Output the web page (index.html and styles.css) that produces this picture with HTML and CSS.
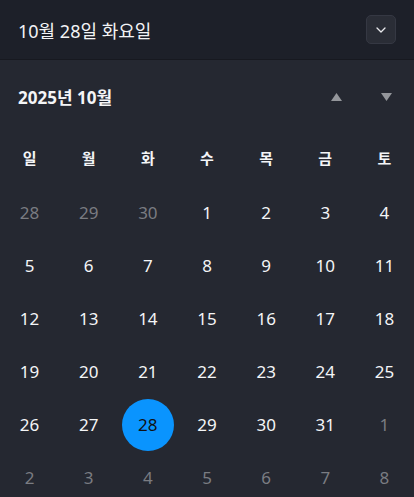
FILE: index.html
```html
<!DOCTYPE html>
<html lang="ko">
<head>
<meta charset="utf-8">
<link rel="stylesheet" href="styles.css">
</head>
<body>
<div class="picker">
  <header class="header">
    <span class="header-date">10월 28일 화요일</span>
    <button class="toggle" aria-label="접기">
      <svg width="10" height="6" viewBox="0 0 10 6"><path d="M1 1 L5 5 L9 1" fill="none" stroke="#e8e9ec" stroke-width="1.3" stroke-linecap="round" stroke-linejoin="round"/></svg>
    </button>
  </header>
  <section class="calendar">
    <div class="month-row">
      <span class="month-title">2025년 10월</span>
      <div class="nav">
        <button class="nav-btn" aria-label="이전 달"><svg width="11" height="8" viewBox="0 0 11 8"><path d="M5.5 0 L11 8 L0 8 Z" fill="#94969b"/></svg></button>
        <button class="nav-btn" aria-label="다음 달"><svg width="11" height="8" viewBox="0 0 11 8"><path d="M0 0 L11 0 L5.5 8 Z" fill="#94969b"/></svg></button>
      </div>
    </div>
    <div class="grid">
      <div class="wd">일</div><div class="wd">월</div><div class="wd">화</div><div class="wd">수</div><div class="wd">목</div><div class="wd">금</div><div class="wd">토</div>

      <div class="d other">28</div><div class="d other">29</div><div class="d other">30</div><div class="d">1</div><div class="d">2</div><div class="d">3</div><div class="d">4</div>
      <div class="d">5</div><div class="d">6</div><div class="d">7</div><div class="d">8</div><div class="d">9</div><div class="d">10</div><div class="d">11</div>
      <div class="d">12</div><div class="d">13</div><div class="d">14</div><div class="d">15</div><div class="d">16</div><div class="d">17</div><div class="d">18</div>
      <div class="d">19</div><div class="d">20</div><div class="d">21</div><div class="d">22</div><div class="d">23</div><div class="d">24</div><div class="d">25</div>
      <div class="d">26</div><div class="d">27</div><div class="d selected"><span class="dot">28</span></div><div class="d">29</div><div class="d">30</div><div class="d">31</div><div class="d other">1</div>
      <div class="d other">2</div><div class="d other">3</div><div class="d other">4</div><div class="d other">5</div><div class="d other">6</div><div class="d other">7</div><div class="d other">8</div>
    </div>
  </section>
</div>
</body>
</html>
```
FILE: styles.css
```css
html, body {
  margin: 0;
  padding: 0;
  background: #252831;
  font-family: "Noto Sans", "Noto Sans CJK KR", sans-serif;
  color: #ffffff;
}
.picker {
  width: 414px;
  height: 497px;
  overflow: hidden;
}
.header {
  height: 60px;
  box-sizing: border-box;
  background: #1d2029;
  border-bottom: 1px solid #171920;
  display: flex;
  align-items: center;
  justify-content: space-between;
  padding: 0 18px;
}
.header-date {
  font-size: 18px;
  color: #f2f3f5;
}
.toggle {
  width: 30px;
  height: 29px;
  box-sizing: border-box;
  border: 1px solid #353843;
  border-radius: 5px;
  background: #2a2d36;
  display: flex;
  align-items: center;
  justify-content: center;
  padding: 0;
}
.calendar {
  background: #252831;
}
.month-row {
  height: 73px;
  display: flex;
  align-items: center;
  justify-content: space-between;
  padding: 0 13px 0 18px;
}
.month-title {
  font-size: 17px;
  font-weight: 700;
  color: #f4f5f7;
}
.nav {
  display: flex;
  gap: 20px;
}
.nav-btn {
  width: 30px;
  height: 30px;
  background: none;
  border: none;
  padding: 0;
  display: flex;
  align-items: center;
  justify-content: center;
}
.grid {
  display: grid;
  grid-template-columns: repeat(7, 1fr);
  grid-auto-rows: 53px;
}
.wd, .d {
  display: flex;
  align-items: center;
  justify-content: center;
}
.wd {
  font-size: 15px;
  font-weight: 700;
  color: #f4f5f7;
  padding-bottom: 4px;
}
.d {
  font-size: 17px;
  color: #f4f5f7;
}
.d.other {
  color: #7a7c82;
}
.dot {
  width: 52px;
  height: 52px;
  border-radius: 50%;
  background: #0a94fe;
  color: #101114;
  display: flex;
  align-items: center;
  justify-content: center;
}
```
